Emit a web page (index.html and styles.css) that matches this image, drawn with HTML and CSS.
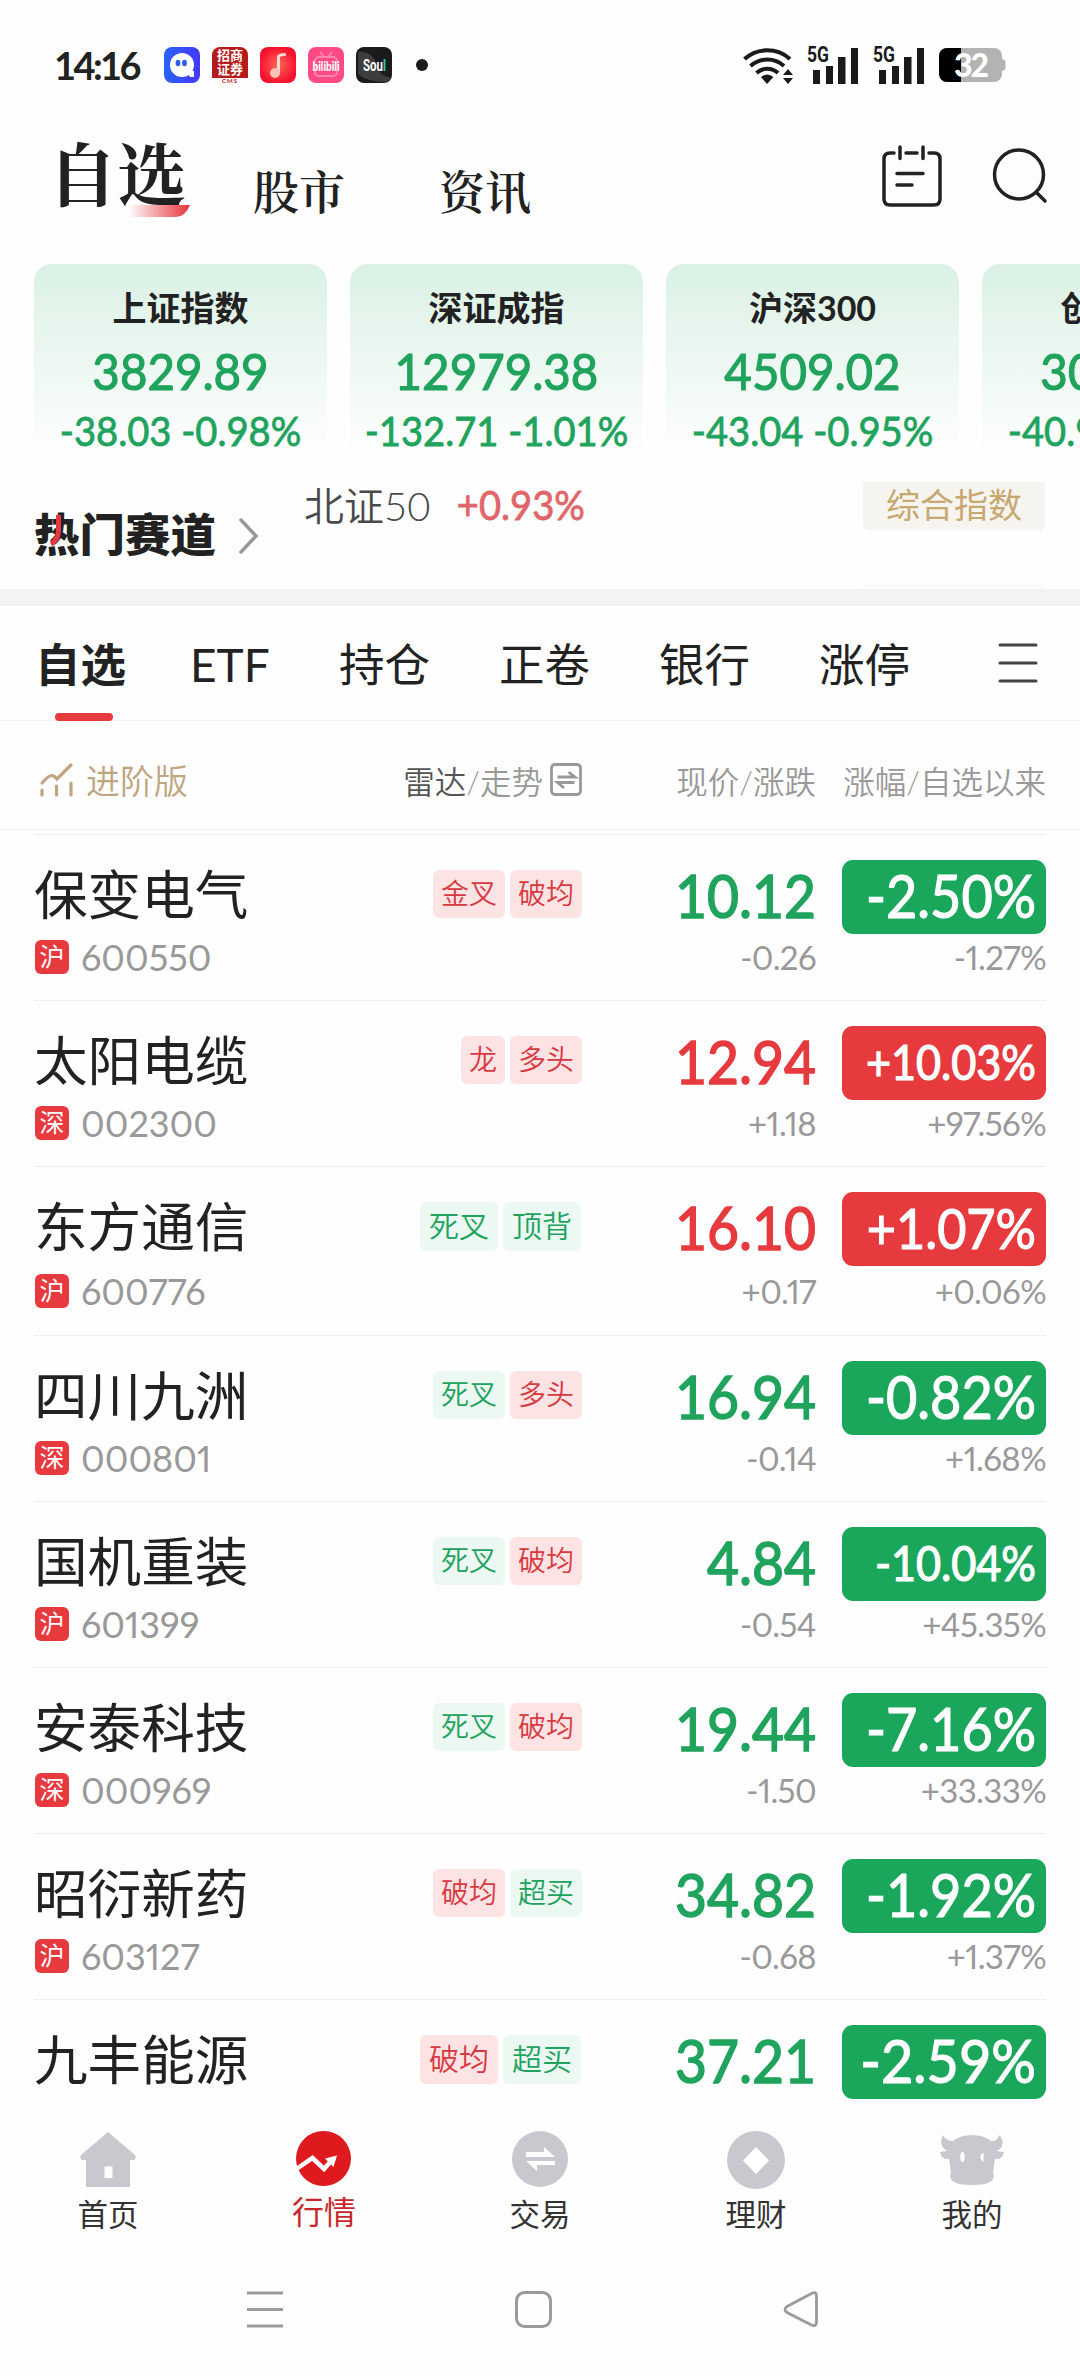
FILE: index.html
```html
<!DOCTYPE html>
<html lang="zh-CN">
<head>
    <meta charset="UTF-8">
    <title>自选</title>
    <link rel="stylesheet" href="styles.css">
</head>

<body>

    <!-- 状态栏 -->
    <div class="status">
        <span class="time">14:16</span>
        <div class="apps">
            <svg width="36" height="36" viewBox="0 0 36 36">
                <defs><linearGradient id="g1" x1="0" y1="0" x2="1" y2="0"><stop offset="0" stop-color="#2a62f5"/><stop offset="1" stop-color="#4338f8"/></linearGradient></defs>
                <rect width="36" height="36" rx="8" fill="url(#g1)"/>
                <circle cx="18" cy="18" r="12" fill="#fff"/>
                <path d="M22 24h8v6h-4z" fill="#fff"/>
                <ellipse cx="14" cy="16" rx="2.4" ry="3.2" fill="#2b5cf5"/><ellipse cx="20.5" cy="16" rx="2.4" ry="3.2" fill="#2b5cf5"/>
            </svg>
            <div class="cms">
                <div class="cms-box">招商<br>证券</div>
                <div class="cms-en">CMS</div>
            </div>
            <svg width="36" height="36" viewBox="0 0 36 36">
                <defs><radialGradient id="g2"><stop offset="0" stop-color="#ff6a58"/><stop offset="1" stop-color="#f5122f"/></radialGradient></defs>
                <rect width="36" height="36" rx="8" fill="url(#g2)"/>
                <path d="M18.500 26V9.500q0-1.500 6-2" fill="none" stroke="#ffd9cf" stroke-width="3" stroke-linecap="round"/>
                <circle cx="15" cy="26" r="5" fill="#ffc3b6"/>
            </svg>
            <svg width="36" height="36" viewBox="0 0 36 36">
                <rect width="36" height="36" rx="8" fill="#ff4a84"/>
                <rect x="7" y="10" width="22" height="19" rx="4" fill="none" stroke="#ff86ad" stroke-width="2"/>
                <path d="M12 5l4 5M24 5l-4 5" stroke="#ff86ad" stroke-width="2"/>
                <text class="bili" x="18" y="24" text-anchor="middle" textLength="27" lengthAdjust="spacingAndGlyphs">bilibili</text>
            </svg>
            <svg width="36" height="36" viewBox="0 0 36 36">
                <rect width="36" height="36" rx="8" fill="#1a1b1c"/>
                <path d="M2 5q16-2 20 18q4 6 13 8l-4 4q-20 0-29-8z" fill="#555" opacity=".6"/>
                <text class="soul" x="18.500" y="24" text-anchor="middle" textLength="23" lengthAdjust="spacingAndGlyphs">Sou<tspan fill="#1fd0c0">l</tspan></text>
            </svg>
        </div>
        <i class="dot"></i>
        <div class="signals">
            <svg width="50" height="37" viewBox="0 0 50 37">
                <g fill="none" stroke="#1a1a1a" stroke-width="4">
                    <path d="M1.500 12a34 34 0 0 1 45.500 0"/>
                    <path d="M7.500 19a25 25 0 0 1 33.500 0"/>
                    <path d="M13.500 26a16 16 0 0 1 21.500 0"/>
                </g>
                <path d="M18 30q6-5 12.500 0L24 37z" fill="#1a1a1a"/>
                <path d="M40 28l5-6 5 6zM40 31l5 6 5-6z" fill="#1a1a1a"/>
            </svg>
            <svg width="52" height="38" viewBox="0 0 52 38">
                <text class="g5" x="0" y="16" textLength="22" lengthAdjust="spacingAndGlyphs">5G</text>
                <path d="M6 24h7v14h-7zM19 20h7v18h-7zM31 11h7.500v27h-7.500zM44 2h7v36h-7z" fill="#1a1a1a"/>
            </svg>
            <svg width="52" height="38" viewBox="0 0 52 38">
                <text class="g5" x="0" y="16" textLength="22" lengthAdjust="spacingAndGlyphs">5G</text>
                <path d="M6 24h7v14h-7zM19 20h7v18h-7zM31 11h7.500v27h-7.500zM44 2h7v36h-7z" fill="#1a1a1a"/>
            </svg>
            <svg width="67" height="34" viewBox="0 0 67 34">
                <rect width="63" height="34" rx="8" fill="#b3b3b3"/>
                <path d="M63 11q3.500 1 3.500 3v6q0 2-3.500 3z" fill="#b3b3b3"/>
                <path d="M22 0H8a8 8 0 0 0-8 8v18a8 8 0 0 0 8 8h14z" fill="#000"/>
                <text class="bat" x="15" y="29" textLength="35">32</text>
            </svg>
        </div>
    </div>

    <!-- 顶部导航 -->
    <div class="header">
        <div class="h-on">自选
            <svg class="swoosh" width="62" height="12" viewBox="0 0 62 12">
                <defs><linearGradient id="g3"><stop offset="0" stop-color="#fff"/><stop offset="1" stop-color="#e5353c"/></linearGradient></defs>
                <path d="M0 0H62Q57 12 48 12H0z" fill="url(#g3)"/>
            </svg>
        </div>
        <div class="h-tab">股市</div>
        <div class="h-tab">资讯</div>
        <div class="h-icons">
            <svg width="60" height="62" viewBox="0 0 60 62" fill="none" stroke="#222" stroke-width="3.500" stroke-linecap="round">
                <path d="M12 8H8q-6 0-6 6V54q0 6 6 6H52q6 0 6-6V14q0-6-6-6H47M24 8H35M18 2V13.500M41 2V13.500"/>
                <path d="M15 28.500H41M15 40H30"/>
            </svg>
            <svg width="54" height="55" viewBox="0 0 54 55" fill="none" stroke="#222" stroke-width="3.500" stroke-linecap="round">
                <circle cx="26" cy="26.500" r="24.500"/>
                <path d="M43.500 44.500L52 53"/>
            </svg>
        </div>
    </div>

    <!-- 指数卡片 -->
    <div class="cards">
        <div class="card"><h3>上证指数</h3><b>3829.89</b><p>-38.03 -0.98%</p></div>
        <div class="card"><h3>深证成指</h3><b>12979.38</b><p>-132.71 -1.01%</p></div>
        <div class="card"><h3>沪深300</h3><b>4509.02</b><p>-43.04 -0.95%</p></div>
        <div class="card"><h3>创业板指</h3><b>3013.43</b><p>-40.98 -1.34%</p></div>
    </div>

    <!-- 热门赛道 -->
    <div class="hot">
        <div class="hot-title">热门赛道
            <svg class="flame" width="14" height="32" viewBox="0 0 14 32"><path d="M9.500 1V16Q9.500 26 2 30" fill="none" stroke="#e63a3f" stroke-width="5"/></svg>
        </div>
        <svg class="chev" width="20" height="38" viewBox="0 0 20 38" fill="none" stroke="#999" stroke-width="3.500" stroke-linecap="round"><path d="M2 3L17 19L2 35"/></svg>
        <div class="ticker">
            <div class="tick">
                <span class="t-name">北证50</span>
                <span class="t-pct">+0.93%</span>
                <span class="t-tag">综合指数</span>
            </div>
            <div class="tick-next"></div>
        </div>
    </div>

    <!-- 分组标签 -->
    <div class="tabs">
        <span class="tab on">自选</span>
        <span class="tab etf">ETF</span>
        <span class="tab">持仓</span>
        <span class="tab">正卷</span>
        <span class="tab">银行</span>
        <span class="tab">涨停</span>
        <svg class="menu" width="40" height="42" viewBox="0 0 40 42" stroke="#444" stroke-width="3" stroke-linecap="round"><path d="M2 3H38M2 21H38M2 39H38"/></svg>
    </div>

    <!-- 表头 -->
    <div class="thead">
        <div class="pro">
            <svg width="34" height="34" viewBox="0 0 34 34" fill="none" stroke="#c0a581" stroke-width="3.200" stroke-linecap="round"><path d="M2 20Q9 12 12 12.500T17 16L31 2M2 27V32M16.500 23V32M31 20V32"/></svg>
            <span>进阶版</span>
        </div>
        <div class="radar">
            <span><em>雷达</em>/走势</span>
            <svg width="32" height="33" viewBox="0 0 32 33" fill="none" stroke="#999" stroke-width="2.800"><rect x="1.500" y="1.500" width="29" height="30" rx="3.500"/><path d="M7.500 14H25L18.500 9M24.500 19.500H7.500L14 25"/></svg>
        </div>
        <div class="th-price">现价/涨跌</div>
        <div class="th-pct">涨幅/自选以来</div>
    </div>

    <!-- 自选列表 -->
    <div class="list">
        <div class="stock">
            <div class="name">保变电气</div>
            <div class="tags"><span class="tag r">金叉</span><span class="tag r">破均</span></div>
            <div class="price down">10.12</div>
            <div class="pct bg-down"><b>-2.50%</b></div>
            <div class="code"><i>沪</i>600550</div>
            <div class="chg">-0.26</div>
            <div class="since">-1.27%</div>
        </div>
        <div class="stock">
            <div class="name">太阳电缆</div>
            <div class="tags"><span class="tag r">龙</span><span class="tag r">多头</span></div>
            <div class="price up">12.94</div>
            <div class="pct bg-up small"><b>+10.03%</b></div>
            <div class="code"><i>深</i>002300</div>
            <div class="chg">+1.18</div>
            <div class="since">+97.56%</div>
        </div>
        <div class="stock tall">
            <div class="name">东方通信</div>
            <div class="tags big"><span class="tag g">死叉</span><span class="tag g">顶背</span></div>
            <div class="price up">16.10</div>
            <div class="pct bg-up mid"><b>+1.07%</b></div>
            <div class="code"><i>沪</i>600776</div>
            <div class="chg">+0.17</div>
            <div class="since">+0.06%</div>
        </div>
        <div class="stock">
            <div class="name">四川九洲</div>
            <div class="tags"><span class="tag g">死叉</span><span class="tag r">多头</span></div>
            <div class="price down">16.94</div>
            <div class="pct bg-down"><b>-0.82%</b></div>
            <div class="code"><i>深</i>000801</div>
            <div class="chg">-0.14</div>
            <div class="since">+1.68%</div>
        </div>
        <div class="stock">
            <div class="name">国机重装</div>
            <div class="tags"><span class="tag g">死叉</span><span class="tag r">破均</span></div>
            <div class="price down">4.84</div>
            <div class="pct bg-down small"><b>-10.04%</b></div>
            <div class="code"><i>沪</i>601399</div>
            <div class="chg">-0.54</div>
            <div class="since">+45.35%</div>
        </div>
        <div class="stock">
            <div class="name">安泰科技</div>
            <div class="tags"><span class="tag g">死叉</span><span class="tag r">破均</span></div>
            <div class="price down">19.44</div>
            <div class="pct bg-down"><b>-7.16%</b></div>
            <div class="code"><i>深</i>000969</div>
            <div class="chg">-1.50</div>
            <div class="since">+33.33%</div>
        </div>
        <div class="stock">
            <div class="name">昭衍新药</div>
            <div class="tags"><span class="tag r">破均</span><span class="tag g">超买</span></div>
            <div class="price down">34.82</div>
            <div class="pct bg-down"><b>-1.92%</b></div>
            <div class="code"><i>沪</i>603127</div>
            <div class="chg">-0.68</div>
            <div class="since">+1.37%</div>
        </div>
        <div class="stock">
            <div class="name">九丰能源</div>
            <div class="tags big"><span class="tag r">破均</span><span class="tag g">超买</span></div>
            <div class="price down">37.21</div>
            <div class="pct bg-down wide"><b>-2.59%</b></div>
        </div>
    </div>

    <!-- 底部导航 -->
    <div class="nav">
        <div class="nav-item">
            <svg width="64" height="60" viewBox="0 0 64 60"><path fill="#c8c9cf" fill-rule="evenodd" d="M32 2L59 25q2 2-1 5H54V57H10V30H6q-3-3-1-5zM28.500 36.500v11.500h8v-11.500z"/></svg>
            <span>首页</span>
        </div>
        <div class="nav-item cur">
            <svg width="64" height="60" viewBox="0 0 64 60"><circle cx="31.500" cy="28.500" r="27.500" fill="#de1a1e"/><path d="M3 40L20.500 28L32 39L40 30" fill="none" stroke="#fff" stroke-width="4.500"/><path d="M33 28.500L45 25.500L41.500 37z" fill="#fff"/></svg>
            <span>行情</span>
        </div>
        <div class="nav-item">
            <svg width="64" height="60" viewBox="0 0 64 60"><circle cx="32" cy="29" r="28" fill="#c8c9cf"/><path d="M18 22H36V17L47 27H18zM47 31H18L29 41V35H47z" fill="#fff"/></svg>
            <span>交易</span>
        </div>
        <div class="nav-item">
            <svg width="64" height="60" viewBox="0 0 64 60"><circle cx="32" cy="30" r="29" fill="#c8c9cf"/><path d="M32 17L45 30.500L32 44L19 30.500z" fill="#fff"/></svg>
            <span>理财</span>
        </div>
        <div class="nav-item">
            <svg width="64" height="60" viewBox="0 0 64 60"><path fill="#c8c9cf" d="M3 5Q6 11 13 11Q20 5 32 5T51 11Q58 11 59 5Q64 9 62 16Q60 20 57 21L64 22Q63 30 55 29L53 42Q58 55 32 55T11 42L9 29Q1 30 0 22L7 21Q-2 15 3 5z"/><ellipse cx="22.500" cy="27" rx="2.200" ry="5" fill="#fff"/><path d="M43.500 22.500Q37 27 43.500 32z" fill="#fff"/></svg>
            <span>我的</span>
        </div>
    </div>

    <div class="sysbar">
        <svg width="36" height="37" viewBox="0 0 36 37" stroke="#9b9b9b" stroke-width="3"><path d="M0 2H36M0 18.500H36M0 35H36"/></svg>
        <svg width="37" height="37" viewBox="0 0 37 37" fill="none" stroke="#9b9b9b" stroke-width="3"><rect x="1.500" y="1.500" width="34" height="34" rx="8"/></svg>
        <svg width="36" height="37" viewBox="0 0 36 37" fill="none" stroke="#9b9b9b" stroke-width="2.800"><path d="M28.500 2.500Q33.500 0 33.500 5V31Q33.500 36 28.500 34L4 21.500Q0 18.500 4 15.500z"/></svg>
    </div>

</body>
</html>
```
FILE: styles.css
```css
        * {
            box-sizing: border-box;
            margin: 0;
            padding: 0;
        }
        body {
            width: 1080px;
            height: 2376px;
            overflow: hidden;
            background: #fefefe;
            color: #222;
            font-family: "Lato", "Noto Sans CJK SC", sans-serif;
        }
        svg {
            display: block;
            flex: none;
            overflow: visible;
        }
        i, em {
            font-style: normal;
        }

        /* 状态栏 */
        .status {
            display: flex;
            align-items: center;
            height: 130px;
            padding: 0 74px 0 54px;
        }
        .time {
            width: 110px;
            font: 700 38px/38px "Lato", sans-serif;
            letter-spacing: -2.6px;
        }
        .apps {
            display: flex;
            gap: 12px;
        }
        .cms {
            width: 36px;
            height: 36px;
        }
        .cms-box {
            height: 31px;
            padding-top: 1px;
            border-radius: 8px 8px 0 0;
            background: #b71c1c;
            color: #fff;
            text-align: center;
            font: 700 13px/14px "Noto Sans CJK SC", sans-serif;
        }
        .cms-en {
            color: #c62828;
            text-align: center;
            font-size: 6px;
            line-height: 6px;
            font-weight: 900;
            letter-spacing: 1px;
        }
        .bili {
            fill: #fff;
            font: 900 13px "Lato", sans-serif;
        }
        .soul {
            fill: #fff;
            font: 700 17px "Roboto", sans-serif;
        }
        .dot {
            width: 12px;
            height: 12px;
            margin-left: 24px;
            border-radius: 50%;
            background: #1a1a1a;
        }
        .signals {
            display: flex;
            align-items: center;
            gap: 14px;
            margin-left: auto;
        }
        .g5 {
            fill: #1a1a1a;
            font: 700 22px "Roboto", sans-serif;
        }
        .bat {
            fill: #fff;
            font: 900 32px "Lato", sans-serif;
        }

        /* 顶部导航 */
        .header {
            display: flex;
            height: 134px;
            padding: 0 33px 0 48px;
            font-family: "Noto Serif CJK SC", "Source Han Serif SC", "Noto Sans CJK SC", serif;
            font-weight: 700;
        }
        .h-on {
            position: relative;
            width: 205px;
            padding-top: 6px;
            font-size: 69px;
            line-height: 72px;
        }
        .swoosh {
            position: absolute;
            left: 80px;
            top: 75px;
        }
        .h-tab {
            width: 186px;
            padding-top: 34px;
            font-size: 46px;
            line-height: 50px;
            font-weight: 600;
        }
        .h-icons {
            display: flex;
            gap: 51px;
            margin-left: auto;
            padding-top: 15px;
        }
        .h-icons svg:last-child {
            margin-top: 3px;
        }

        /* 指数卡片 */
        .cards {
            display: flex;
            gap: 23px;
            height: 190px;
            padding-left: 34px;
            overflow: hidden;
        }
        .card {
            flex: none;
            width: 293px;
            height: 190px;
            padding-top: 24px;
            border-radius: 18px 18px 0 0;
            background: linear-gradient(#daf1e4, #fefefe);
            color: #20a35d;
            text-align: center;
            white-space: nowrap;
        }
        .card h3 {
            color: #222;
            font-size: 34px;
            line-height: 40px;
            font-weight: 700;
        }
        .card b {
            display: block;
            margin-top: 17px;
            font-size: 51px;
            line-height: 52px;
            font-weight: 400;
            -webkit-text-stroke: 1.2px currentColor;
            transform: scaleX(.93);
        }
        .card p {
            margin-top: 13px;
            font-size: 41px;
            line-height: 42px;
            -webkit-text-stroke: .8px currentColor;
            transform: scaleX(.93);
        }

        /* 热门赛道 */
        .hot {
            display: flex;
            height: 135px;
            padding: 28px 35px 0 34px;
        }
        .hot-title {
            position: relative;
            width: 205px;
            padding-top: 25px;
            font: 900 45.5px/50px "Noto Sans CJK SC", sans-serif;
        }
        .flame {
            position: absolute;
            left: 15px;
            top: 32px;
        }
        .chev {
            margin-top: 35px;
        }
        .ticker {
            display: flex;
            flex-direction: column;
            justify-content: space-between;
            flex: 1;
            margin-left: 45px;
        }
        .tick {
            display: flex;
            align-items: center;
            height: 48px;
        }
        .t-name {
            padding-bottom: 5px;
            color: #4a4a4a;
            font-size: 40px;
            font-weight: 350;
        }
        .t-pct {
            margin-left: 22px;
            padding-bottom: 4px;
            color: #e0666b;
            font-size: 41px;
            -webkit-text-stroke: .8px currentColor;
            transform: scaleX(.93);
        }
        .t-tag {
            width: 182px;
            height: 48px;
            margin-left: auto;
            border-radius: 0 0 5px 5px;
            background: #f6f4ee;
            color: #c8a871;
            text-align: center;
            font-size: 34px;
            line-height: 46px;
            font-weight: 400;
        }
        .tick-next {
            align-self: flex-end;
            width: 182px;
            height: 4px;
            border-radius: 4px 4px 0 0;
            background: #fafafa;
        }

        /* 分组标签 */
        .tabs {
            display: flex;
            align-items: flex-start;
            height: 132px;
            padding: 0 42px 0 35px;
            border-top: 17px solid #f2f3f5;
            border-bottom: 1px solid #f2f2f2;
        }
        .tab {
            width: 160px;
            padding-top: 34px;
            font-size: 45.5px;
            line-height: 50px;
            font-weight: 400;
        }
        .on {
            width: 155px;
            font-weight: 700;
        }
        /* 选中下划线 */
        .on::after {
            content: "";
            display: block;
            width: 58px;
            height: 8px;
            margin: 23px 0 0 20px;
            border-radius: 4px;
            background: #e63a3f;
        }
        .etf {
            width: 149px;
            font-size: 46px;
        }
        .menu {
            margin: 36px 0 0 auto;
        }

        /* 表头 */
        .thead {
            display: grid;
            grid-template-columns: 300px 248px 234px 230px;
            align-items: center;
            height: 109px;
            padding: 9px 34px 0;
            border-bottom: 1px solid #eee;
            color: #999;
            font-size: 31.5px;
            font-weight: 350;
            text-align: right;
        }
        .pro {
            display: flex;
            align-items: center;
            gap: 12px;
            padding-left: 6px;
            color: #c0a581;
            font-size: 34px;
        }
        .radar {
            display: flex;
            align-items: center;
            justify-content: flex-end;
            gap: 7px;
        }
        .radar em {
            color: #555;
        }

        /* 自选列表 */
        .list {
            height: 1290px;
            padding: 4px 34px 0;
            overflow: hidden;
        }
        .stock {
            display: grid;
            grid-template-columns: 300px 248px 234px 230px;
            grid-template-rows: 74px 46px;
            height: 166px;
            padding-top: 25px;
            border-top: 1px solid #efefef;
        }
        .tall {
            grid-template-rows: 76px 46px;
            height: 169px;
        }
        .name {
            padding-top: 1px;
            font-size: 53.6px;
            line-height: 66px;
            font-weight: 400;
        }
        .tags {
            display: flex;
            justify-content: flex-end;
            gap: 5px;
            padding-top: 10px;
        }
        .tag {
            height: 48px;
            padding: 0 8px;
            border-radius: 6px;
            font-size: 28px;
            line-height: 47px;
            font-weight: 350;
        }
        .r {
            background: #fde3e4;
            color: #d8393e;
        }
        .g {
            background: #ecf8f2;
            color: #20a35d;
        }
        .big {
            padding-right: 1px;
        }
        .big .tag {
            height: 49px;
            padding: 0 9px;
            font-size: 30px;
        }
        /* 数字稍微压窄 */
        .price {
            text-align: right;
            font-size: 60px;
            line-height: 70px;
            -webkit-text-stroke: 1.5px currentColor;
            transform: scaleX(.92);
            transform-origin: right;
        }
        .up {
            color: #e63a3f;
        }
        .down {
            color: #20a35d;
        }
        .pct {
            width: 204px;
            height: 74px;
            margin-left: 26px;
            padding-right: 10px;
            border-radius: 11px;
            color: #fff;
            text-align: right;
            font-size: 60px;
            line-height: 71px;
        }
        .pct b {
            display: block;
            font-weight: 400;
            -webkit-text-stroke: 1.2px currentColor;
            transform: scaleX(.9);
            transform-origin: right;
        }
        .bg-up {
            background: #e63a3f;
        }
        .bg-down {
            background: #1aa75c;
        }
        .mid {
            font-size: 56px;
        }
        .small {
            font-size: 48px;
        }
        .wide b {
            transform: scaleX(.93);
        }
        .code {
            display: flex;
            align-items: center;
            grid-column: 1 / 3;
            gap: 12px;
            color: #999;
            font-size: 36px;
            font-variant-numeric: proportional-nums;
        }
        .code i {
            width: 34px;
            height: 34px;
            margin-left: 1px;
            border-radius: 6px;
            background: #e63a3f;
            color: #fff;
            text-align: center;
            font-size: 25px;
            line-height: 32px;
            letter-spacing: 0;
        }
        .chg, .since {
            color: #999;
            text-align: right;
            font-size: 33px;
            line-height: 46px;
            letter-spacing: -.6px;
            font-variant-numeric: proportional-nums;
        }

        /* 底部导航 */
        .nav {
            display: flex;
            height: 148px;
            padding-top: 10px;
        }
        .nav-item {
            display: flex;
            flex-direction: column;
            align-items: center;
            flex: 1;
            color: #333;
            font-size: 30.5px;
            line-height: 40px;
            font-weight: 400;
        }
        .nav-item span {
            margin-top: 4px;
        }
        .cur {
            color: #c8282d;
            font-size: 32px;
        }
        .cur span {
            margin-top: 2px;
        }

        .sysbar {
            display: flex;
            justify-content: space-between;
            padding: 23px 261px 0 247px;
        }
```
